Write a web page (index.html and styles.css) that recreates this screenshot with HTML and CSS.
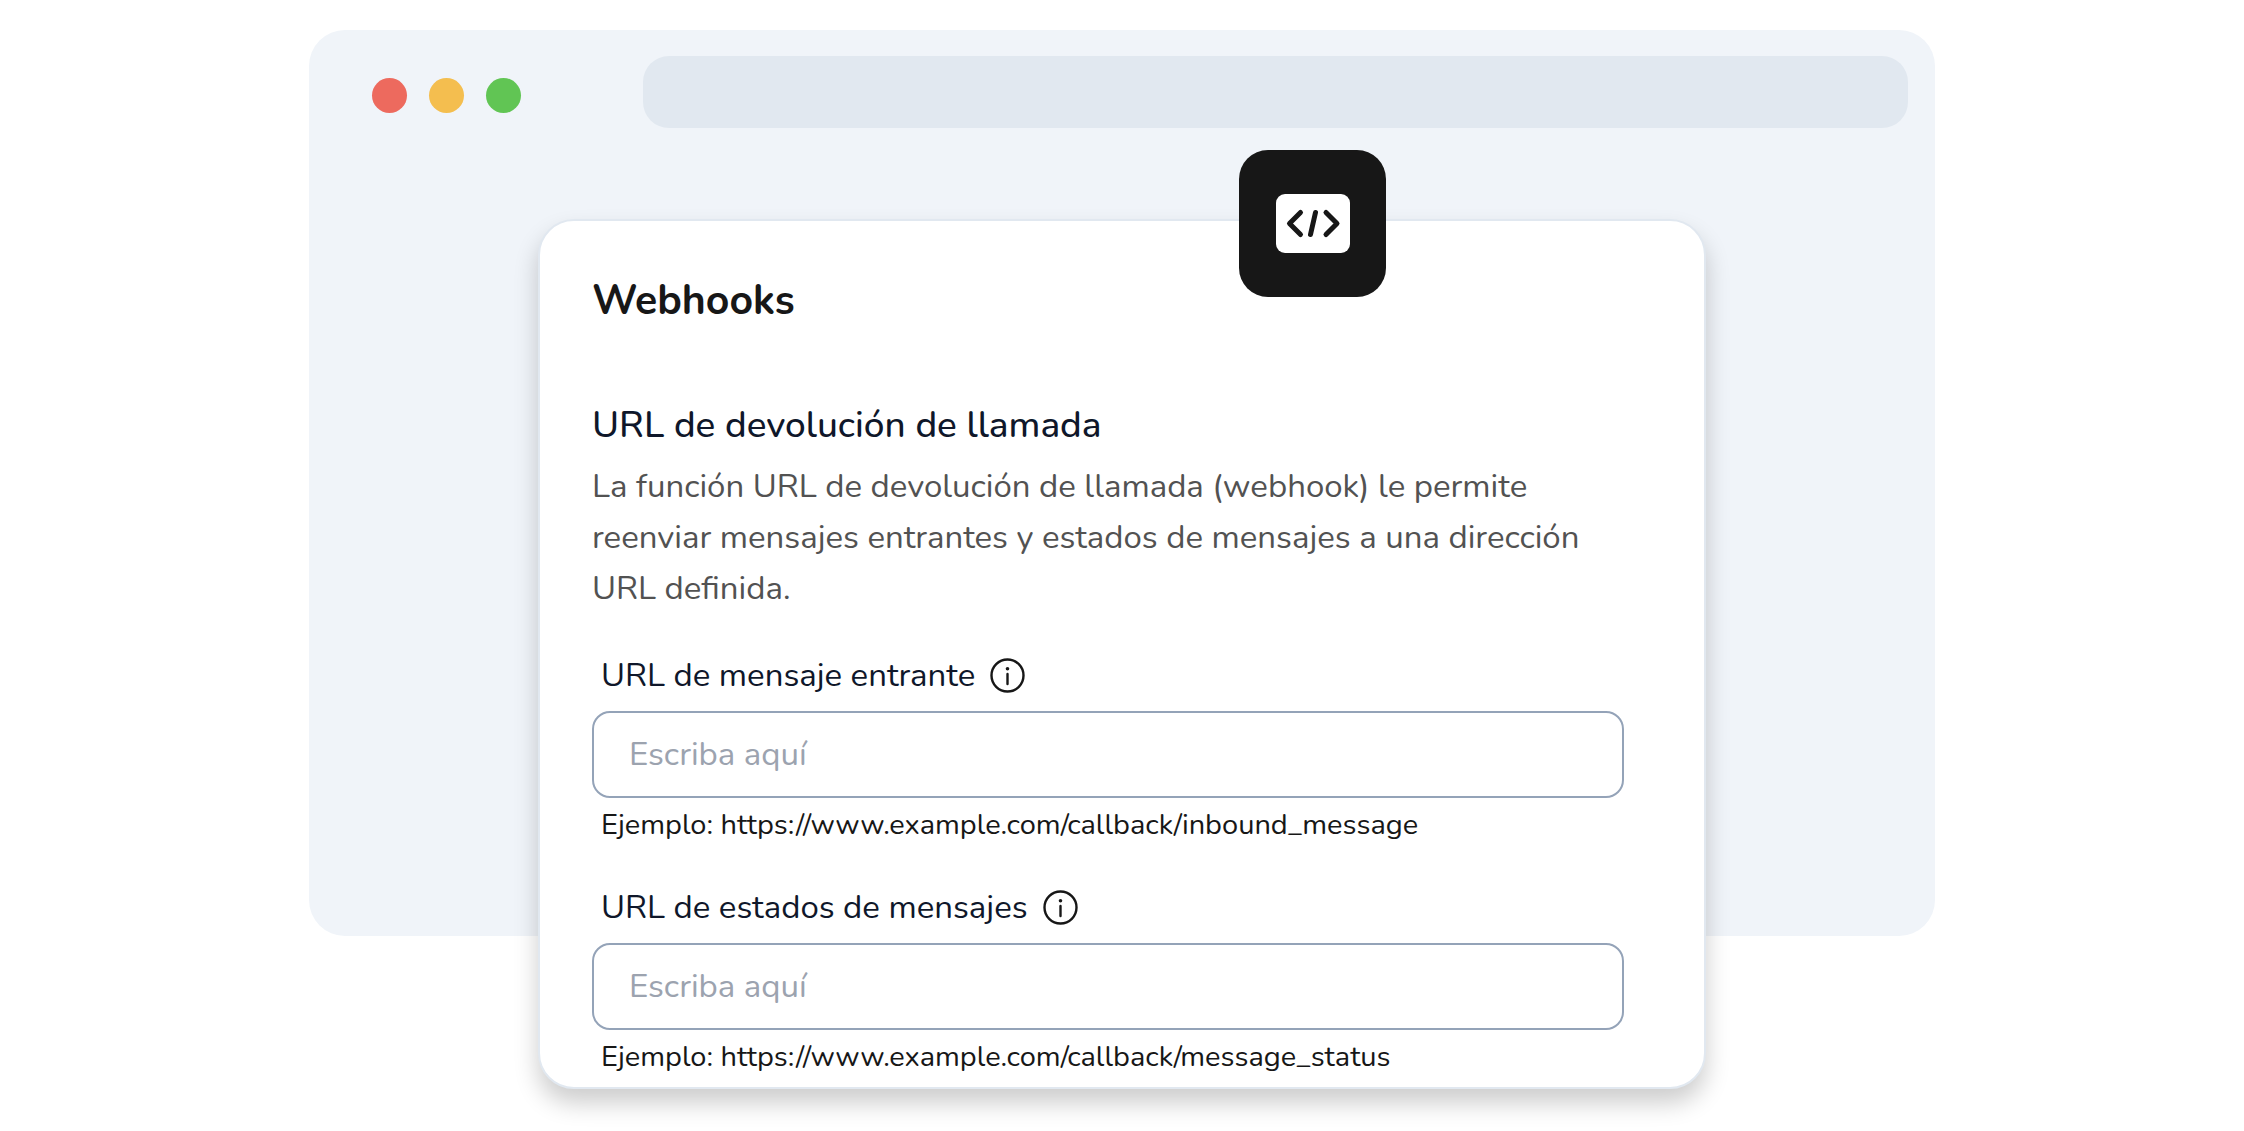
FILE: index.html
```html
<!DOCTYPE html>
<html lang="es">

<head>
    <meta charset="UTF-8">
    <meta name="viewport" content="width=device-width, initial-scale=1.0">
    <link rel="stylesheet" href="styles.css">
    <title>Webhooks</title>
</head>

<body>
    <main class="browser">
        <div class="toolbar">
            <div class="dots">
                <span class="dot red"></span>
                <span class="dot yellow"></span>
                <span class="dot green"></span>
            </div>
            <div class="address-bar"></div>
        </div>
        <section class="card">
            <div class="badge">
                <svg width="74" height="59" viewBox="0 0 74 59" aria-hidden="true">
                    <rect width="74" height="59" rx="9" fill="#fff" />
                    <path d="M24.5 18.5 13.5 29.5 24.5 40.5M39.5 18.5 34.5 40.5M50 18.5 61 29.5 50 40.5" fill="none"
                        stroke="#171717" stroke-width="5" stroke-linecap="round" stroke-linejoin="round" />
                </svg>
            </div>
            <h1>Webhooks</h1>
            <h2>URL de devolución de llamada</h2>
            <p class="description">
                La función URL de devolución de llamada (webhook) le permite reenviar mensajes entrantes y estados de
                mensajes a una dirección URL definida.
            </p>
            <form>
                <div class="field">
                    <div class="field-label">
                        <label for="inbound-url">URL de mensaje entrante</label>
                        <svg class="info" viewBox="0 0 35 35" aria-hidden="true">
                            <circle cx="17.5" cy="17.5" r="16" fill="none" stroke="#171717" stroke-width="2.4" />
                            <circle cx="17.5" cy="10.8" r="1.8" fill="#171717" />
                            <path d="M17.5 16v10" stroke="#171717" stroke-width="2.4" stroke-linecap="round" />
                        </svg>
                    </div>
                    <input type="text" id="inbound-url" placeholder="Escriba aquí">
                    <div class="hint">Ejemplo: https://www.example.com/callback/inbound_message</div>
                </div>
                <div class="field">
                    <div class="field-label">
                        <label for="status-url">URL de estados de mensajes</label>
                        <svg class="info" viewBox="0 0 35 35" aria-hidden="true">
                            <circle cx="17.5" cy="17.5" r="16" fill="none" stroke="#171717" stroke-width="2.4" />
                            <circle cx="17.5" cy="10.8" r="1.8" fill="#171717" />
                            <path d="M17.5 16v10" stroke="#171717" stroke-width="2.4" stroke-linecap="round" />
                        </svg>
                    </div>
                    <input type="text" id="status-url" placeholder="Escriba aquí">
                    <div class="hint">Ejemplo: https://www.example.com/callback/message_status</div>
                </div>
            </form>
        </section>
    </main>
</body>

</html>
```
FILE: styles.css
```css
* {
    box-sizing: border-box;
    margin: 0;
    padding: 0;
    font-family: Nunito, "Noto Sans", sans-serif;
}

body {
    /* the bottom padding leaves room for the card and its shadow */
    padding: 30px 24px 195px;
    background-color: #fff;
    color: #171717;
}

/* Browser window */
.browser {
    display: flow-root;
    width: 100%;
    max-width: 1626px;
    margin: 0 auto;
    border-radius: 36px;
    background-color: #f0f4f9;
}

.toolbar {
    display: flex;
    align-items: center;
    gap: 122px;
    padding: 26px 27px 0 63px;
}

.dots {
    display: flex;
    gap: 22px;
    padding-top: 6px;
}

.dot {
    width: 35px;
    height: 35px;
    border-radius: 50%;
}

.red {
    background-color: #ed6a5e;
}

.yellow {
    background-color: #f4be4f;
}

.green {
    background-color: #61c554;
}

.address-bar {
    flex: 1;
    height: 72px;
    border-radius: 26px;
    background-color: #e1e8f0;
}

/* The card hangs out below the window */
.card {
    position: relative;
    max-width: 1168px;
    margin: 91px auto -153px;
    padding: 52px 80px 10px 52px;
    border: 2px solid #e1e8f0;
    border-radius: 36px;
    background-color: #fff;
    box-shadow: 0 14px 24px rgba(0, 0, 0, 0.2);
}

.badge {
    position: absolute;
    top: -71px;
    right: 318px;
    display: flex;
    justify-content: center;
    align-items: center;
    width: 147px;
    height: 147px;
    border-radius: 29px;
    background-color: #171717;
}

h1 {
    font-size: 41px;
    line-height: 56px;
    font-weight: 700;
}

h2 {
    margin-top: 71px;
    font-size: 37px;
    line-height: 50px;
    font-weight: 500;
    color: #0f172a;
}

.description {
    margin-top: 11px;
    font-size: 33px;
    line-height: 51px;
    color: #525252;
}

.field {
    margin-top: 39px;
}

.field + .field {
    margin-top: 40px;
}

.field-label {
    display: flex;
    align-items: center;
    gap: 15px;
    padding-left: 9px;
    font-size: 33px;
    line-height: 45px;
    color: #0f172a;
}

.info {
    width: 35px;
    height: 35px;
}

.field input {
    display: block;
    width: 100%;
    height: 87px;
    margin-top: 13px;
    padding: 0 35px;
    border: 2px solid #94a3b8;
    border-radius: 18px;
    background-color: #fff;
    font-size: 33px;
    color: #0f172a;
}

.field input::placeholder {
    color: #9ca3af;
}

.hint {
    margin-top: 7px;
    padding-left: 9px;
    font-size: 29px;
    line-height: 40px;
}
```
